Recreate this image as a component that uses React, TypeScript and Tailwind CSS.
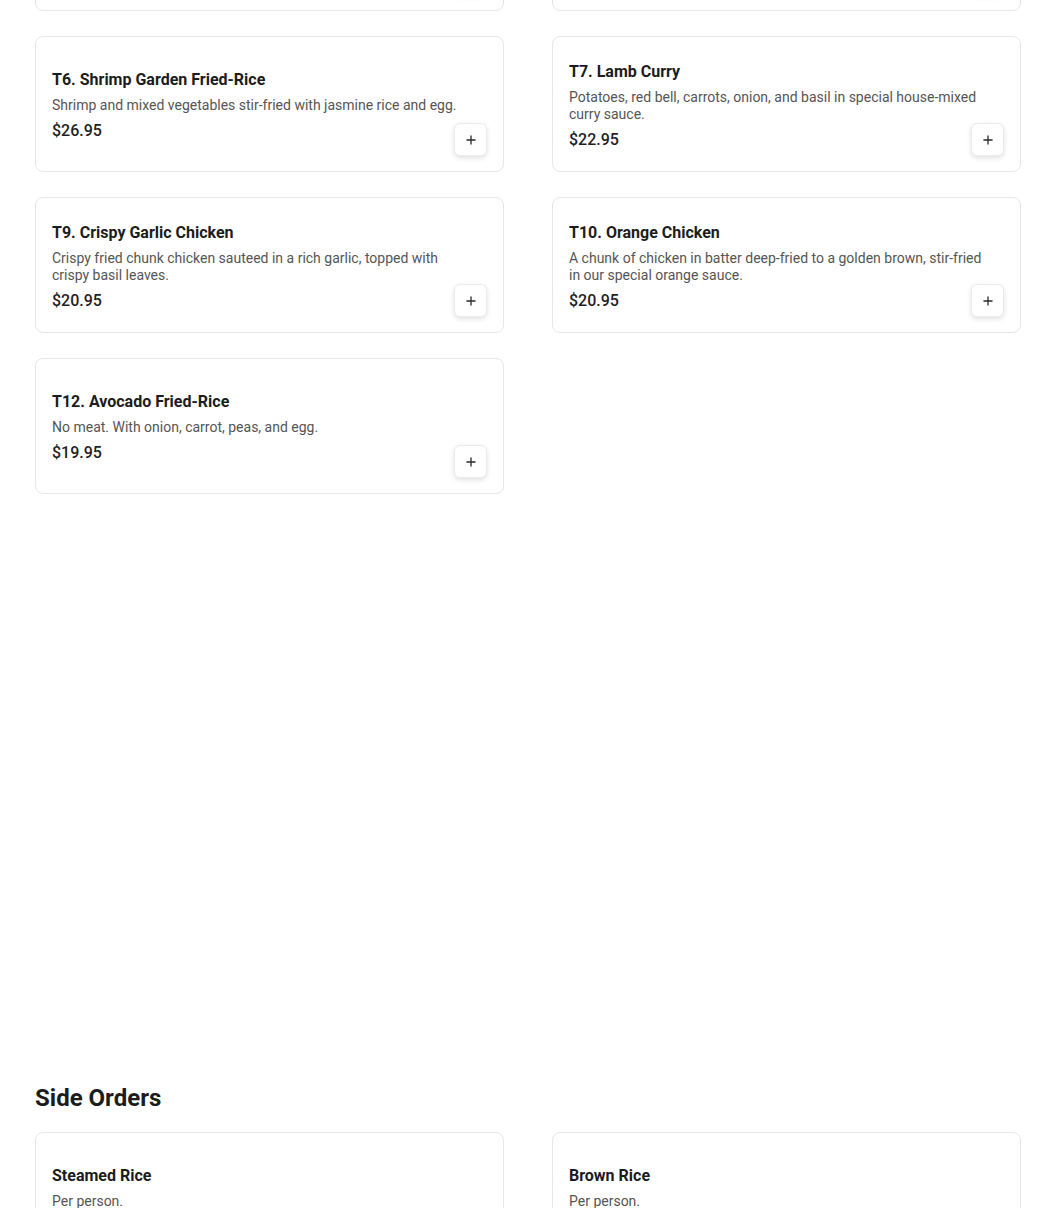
import { Plus } from "lucide-react";

interface Item {
  name: string;
  description: string;
  price: string;
}

const entrees: Item[] = [
  {
    name: "T4. Pad Kee Mao",
    description: "Wide rice noodles with basil, onion, bell pepper and chili.",
    price: "$19.95",
  },
  {
    name: "T5. Cashew Chicken",
    description: "Chicken stir-fried with cashew nuts, onion and bell pepper.",
    price: "$20.95",
  },
  {
    name: "T6. Shrimp Garden Fried-Rice",
    description: "Shrimp and mixed vegetables stir-fried with jasmine rice and egg.",
    price: "$26.95",
  },
  {
    name: "T7. Lamb Curry",
    description:
      "Potatoes, red bell, carrots, onion, and basil in special house-mixed curry sauce.",
    price: "$22.95",
  },
  {
    name: "T9. Crispy Garlic Chicken",
    description:
      "Crispy fried chunk chicken sauteed in a rich garlic, topped with crispy basil leaves.",
    price: "$20.95",
  },
  {
    name: "T10. Orange Chicken",
    description:
      "A chunk of chicken in batter deep-fried to a golden brown, stir-fried in our special orange sauce.",
    price: "$20.95",
  },
  {
    name: "T12. Avocado Fried-Rice",
    description: "No meat. With onion, carrot, peas, and egg.",
    price: "$19.95",
  },
];

const sides: Item[] = [
  { name: "Steamed Rice", description: "Per person.", price: "$3.00" },
  { name: "Brown Rice", description: "Per person.", price: "$3.50" },
];

function MenuCard({ item }: Readonly<{ item: Item }>) {
  return (
    <div className="relative flex min-h-[136px] flex-col justify-center rounded-lg border border-[#e6e6e6] bg-white px-4 pt-[3px]">
      <h3 className="text-base leading-6 font-bold text-[#1c1c1c]">{item.name}</h3>
      <p className="mt-[5px] pr-4 text-sm leading-[17px] text-[#555555]">{item.description}</p>
      <p className="mt-[5px] text-base leading-6 font-medium text-[#1f1f1f]">{item.price}</p>
      <button className="absolute right-4 bottom-[15px] flex h-[33px] w-[33px] items-center justify-center rounded-md border border-[#ececec] bg-white text-[#2a2a2a] shadow-[0_2px_5px_rgba(0,0,0,0.12)]">
        <Plus size={14} strokeWidth={2.25} />
      </button>
    </div>
  );
}

export default function App() {
  return (
    <div className="h-[1208px] overflow-hidden bg-white font-['Roboto',sans-serif]">
      <div className="-mt-[125px] pr-[29px] pl-[35px]">
        <div className="grid grid-cols-2 gap-x-12 gap-y-[25px]">
          {entrees.map((item) => (
            <MenuCard key={item.name} item={item} />
          ))}
        </div>

        <section className="mt-[588px]">
          <h2 className="text-2xl leading-8 font-bold text-[#1c1c1c]">Side Orders</h2>
          <div className="mt-[18px] grid grid-cols-2 gap-x-12 gap-y-[25px]">
            {sides.map((item) => (
              <MenuCard key={item.name} item={item} />
            ))}
          </div>
        </section>
      </div>
    </div>
  );
}
